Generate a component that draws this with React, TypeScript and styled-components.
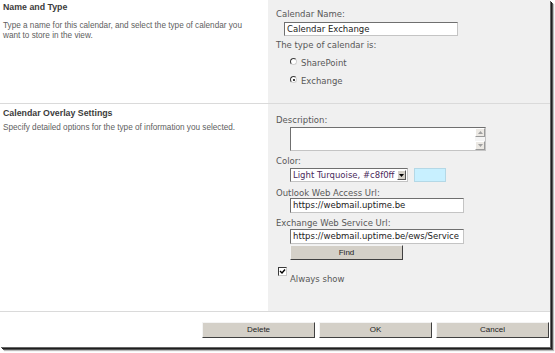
import React from 'react';
import styled, { createGlobalStyle, css } from 'styled-components';

const Global = createGlobalStyle`
  html, body { margin: 0; padding: 0; background: #fff; }
  body { width: 555px; height: 353px; overflow: hidden; }
`;

const Frame = styled.div`
  width: 550px;
  height: 347px;
  background: #fff;
  box-shadow: 1px 1px 0 #666, 2px 2px 0 #1e1e1e, 3px 3px 0 #555, 4px 4px 1px #bbb;
  display: flex;
  flex-direction: column;
`;

const Section = styled.div<{ $h: number }>`
  display: flex;
  height: ${(p) => p.$h}px;
  border-bottom: 1px solid #dadada;
`;

const Left = styled.div<{ $pt: number }>`
  width: 268px;
  box-sizing: border-box;
  padding: ${(p) => p.$pt}px 18px 0 3px;
`;

const Right = styled.div<{ $pt: number }>`
  flex: 1;
  background: #f0f0f0;
  padding: ${(p) => p.$pt}px 0 0 8px;
  display: flex;
  flex-direction: column;
  align-items: flex-start;
`;

const Heading = styled.div`
  font-family: 'Liberation Sans', Arial, sans-serif;
  font-weight: bold;
  font-size: 8.8px;
  line-height: 10px;
  color: #3c3c3c;
`;

const Desc = styled.div<{ $mt: number }>`
  font-family: 'Liberation Sans', Arial, sans-serif;
  font-size: 8.2px;
  line-height: 10px;
  color: #606060;
  margin-top: ${(p) => p.$mt}px;
`;

const Label = styled.div<{ $mt?: number }>`
  font-family: 'DejaVu Sans', Verdana, sans-serif;
  font-size: 8.5px;
  line-height: 10px;
  color: #585858;
  margin-top: ${(p) => p.$mt ?? 0}px;
`;

const TextBox = styled.div<{ $mt: number; $ml: number; $w: number; $h: number }>`
  margin-top: ${(p) => p.$mt}px;
  margin-left: ${(p) => p.$ml}px;
  width: ${(p) => p.$w}px;
  height: ${(p) => p.$h}px;
  box-sizing: border-box;
  background: #fff;
  border: 1px solid;
  border-color: #6f6f6f #c4c4c4 #c4c4c4 #6f6f6f;
  padding-left: 2px;
  font-family: 'DejaVu Sans', Verdana, sans-serif;
  font-size: 8.5px;
  line-height: ${(p) => p.$h - 2}px;
  color: #222;
  white-space: nowrap;
  overflow: hidden;
`;

const RadioRow = styled.div<{ $mt: number }>`
  display: flex;
  align-items: flex-start;
  margin-top: ${(p) => p.$mt}px;
  margin-left: 14px;
`;

const RadioDot = styled.span<{ $on?: boolean }>`
  position: relative;
  width: 7px;
  height: 7px;
  box-sizing: border-box;
  border-radius: 50%;
  border: 1px solid;
  border-color: #3a3a3a #d0d0d0 #d0d0d0 #3a3a3a;
  background: #fff;
  ${(p) =>
    p.$on &&
    css`
      &::after {
        content: '';
        position: absolute;
        left: 1.5px;
        top: 1.5px;
        width: 2px;
        height: 2px;
        border-radius: 50%;
        background: #000;
      }
    `}
`;

const RadioText = styled(Label)`
  margin-left: 4px;
  margin-top: 0;
`;

const TextArea = styled.div`
  margin-top: 2px;
  margin-left: 14px;
  width: 196px;
  height: 24px;
  box-sizing: border-box;
  background: #fff;
  border: 1px solid;
  border-color: #6f6f6f #c4c4c4 #c4c4c4 #6f6f6f;
  display: flex;
  justify-content: flex-end;
`;

const ScrollBar = styled.div`
  width: 10px;
  display: flex;
  flex-direction: column;
  justify-content: space-between;
  background: #f4f4f4;
`;

const ScrollBtn = styled.div`
  height: 9px;
  box-sizing: border-box;
  background: #ece9e4;
  border: 1px solid;
  border-color: #fff #9a9a9a #9a9a9a #fff;
  display: flex;
  align-items: center;
  justify-content: center;
`;

const Arrow = ({ up }: { up?: boolean }) => (
  <svg width="5" height="3" viewBox="0 0 5 3">
    <path d={up ? 'M0 3 L2.5 0 L5 3 Z' : 'M0 0 L2.5 3 L5 0 Z'} fill="#a0a0a0" />
  </svg>
);

const ColorRow = styled.div`
  display: flex;
  align-items: flex-start;
  margin-top: 2px;
  margin-left: 14px;
  gap: 6px;
`;

const Select = styled.div`
  width: 118px;
  height: 14px;
  box-sizing: border-box;
  background: #fff;
  border: 1px solid;
  border-color: #6f6f6f #c4c4c4 #c4c4c4 #6f6f6f;
  display: flex;
`;

const SelectText = styled.div`
  flex: 1;
  padding-left: 2px;
  font-family: 'DejaVu Sans', Verdana, sans-serif;
  font-size: 8.5px;
  line-height: 12px;
  color: #4a2a5c;
  white-space: nowrap;
  overflow: hidden;
`;

const SelectBtn = styled.div`
  width: 9px;
  margin: 1px;
  box-sizing: border-box;
  background: #d4d0c8;
  border: 1px solid;
  border-color: #fff #555 #555 #fff;
  display: flex;
  align-items: center;
  justify-content: center;
`;

const Swatch = styled.div`
  width: 32px;
  height: 14px;
  box-sizing: border-box;
  background: #c8f0ff;
  border: 1px solid #b4d8e6;
`;

const Button = styled.div<{ $w?: number; $h?: number }>`
  width: ${(p) => p.$w ?? 113}px;
  height: ${(p) => p.$h ?? 16}px;
  box-sizing: border-box;
  background: #d4d0c8;
  border: 1px solid;
  border-color: #f4f4f4 #404040 #404040 #f4f4f4;
  font-family: 'Liberation Sans', Arial, sans-serif;
  font-size: 8px;
  line-height: ${(p) => (p.$h ?? 16) - 2}px;
  text-align: center;
  color: #222;
`;

const FindButton = styled(Button)`
  margin-top: 1px;
  margin-left: 14px;
`;

const CheckRow = styled.div`
  display: flex;
  align-items: flex-start;
  margin-top: 7px;
  margin-left: 2px;
`;

const CheckBox = styled.div`
  width: 9px;
  height: 9px;
  box-sizing: border-box;
  background: #fff;
  border: 1px solid;
  border-color: #3a3a3a #c8c8c8 #c8c8c8 #3a3a3a;
  display: flex;
  align-items: center;
  justify-content: center;
`;

const CheckText = styled(Label)`
  margin-top: 7px;
  margin-left: 3px;
`;

const Footer = styled.div`
  flex: 1;
  display: flex;
  justify-content: flex-end;
  align-items: flex-start;
  gap: 4px;
  padding: 10px 1px 0 0;
`;

export default function App() {
  return (
    <>
      <Global />
      <Frame>
        <Section $h={103}>
          <Left $pt={2}>
            <Heading>Name and Type</Heading>
            <Desc $mt={9}>
              Type a name for this calendar, and select the type of calendar you want to store in the view.
            </Desc>
          </Left>
          <Right $pt={9}>
            <Label>Calendar Name:</Label>
            <TextBox $mt={3} $ml={8} $w={174} $h={14}>Calendar Exchange</TextBox>
            <Label $mt={4}>The type of calendar is:</Label>
            <RadioRow $mt={8}>
              <RadioDot />
              <RadioText>SharePoint</RadioText>
            </RadioRow>
            <RadioRow $mt={8}>
              <RadioDot $on />
              <RadioText>Exchange</RadioText>
            </RadioRow>
          </Right>
        </Section>
        <Section $h={207}>
          <Left $pt={4}>
            <Heading>Calendar Overlay Settings</Heading>
            <Desc $mt={5}>Specify detailed options for the type of information you selected.</Desc>
          </Left>
          <Right $pt={11}>
            <Label>Description:</Label>
            <TextArea>
              <ScrollBar>
                <ScrollBtn>
                  <Arrow up />
                </ScrollBtn>
                <ScrollBtn>
                  <Arrow />
                </ScrollBtn>
              </ScrollBar>
            </TextArea>
            <Label $mt={5}>Color:</Label>
            <ColorRow>
              <Select>
                <SelectText>Light Turquoise, #c8f0ff</SelectText>
                <SelectBtn>
                  <svg width="5" height="3" viewBox="0 0 5 3">
                    <path d="M0 0 L2.5 3 L5 0 Z" fill="#000" />
                  </svg>
                </SelectBtn>
              </Select>
              <Swatch />
            </ColorRow>
            <Label $mt={6}>Outlook Web Access Url:</Label>
            <TextBox $mt={0} $ml={14} $w={174} $h={15}>https://webmail.uptime.be</TextBox>
            <Label $mt={5}>Exchange Web Service Url:</Label>
            <TextBox $mt={1} $ml={14} $w={174} $h={15}>
              https://webmail.uptime.be/ews/Service
            </TextBox>
            <FindButton $h={15}>Find</FindButton>
            <CheckRow>
              <CheckBox>
                <svg width="7" height="7" viewBox="0 0 7 7">
                  <path d="M1 3 L3 5 L6 1.5" stroke="#000" strokeWidth="1.4" fill="none" />
                </svg>
              </CheckBox>
              <CheckText>Always show</CheckText>
            </CheckRow>
          </Right>
        </Section>
        <Footer>
          <Button>Delete</Button>
          <Button>OK</Button>
          <Button>Cancel</Button>
        </Footer>
      </Frame>
    </>
  );
}
